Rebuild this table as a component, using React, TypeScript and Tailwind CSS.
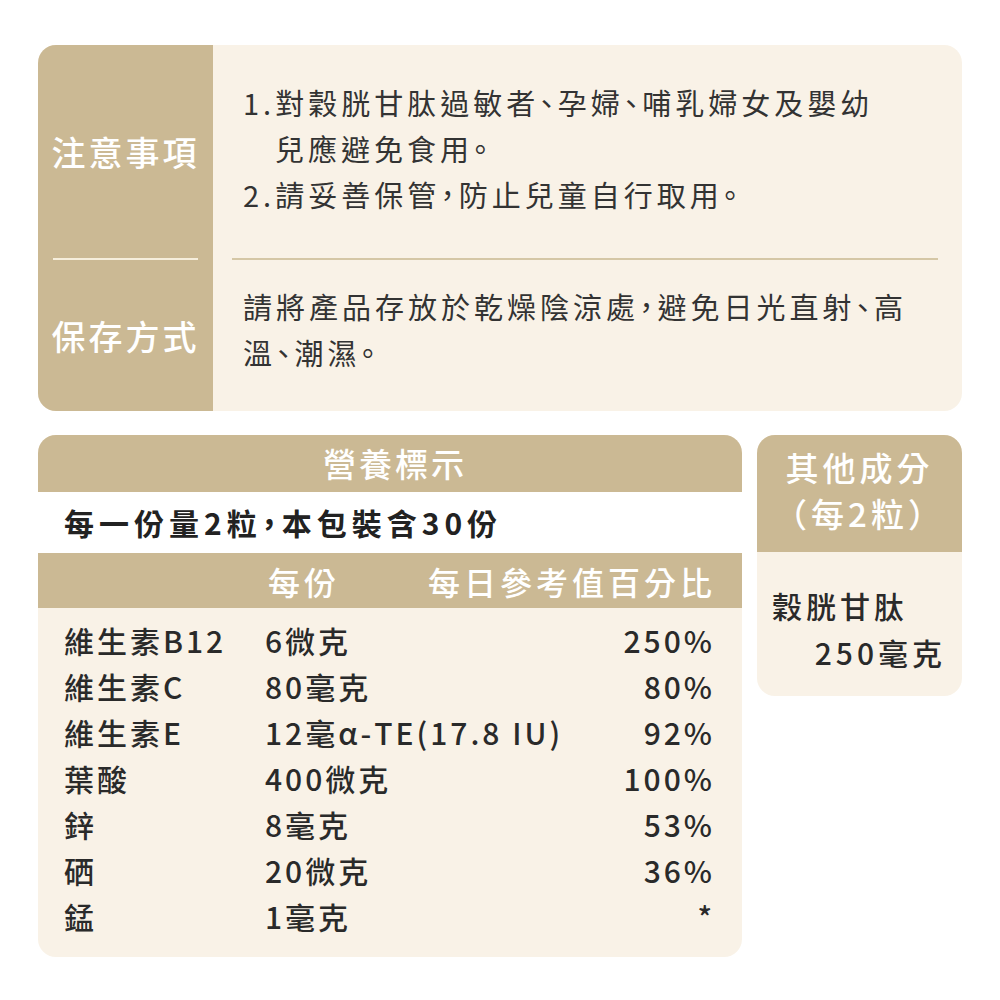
const rows = [
  { name: '維生素B12', amount: '6微克', pct: '250%' },
  { name: '維生素C', amount: '80毫克', pct: '80%' },
  { name: '維生素E', amount: '12毫α-TE(17.8 IU)', pct: '92%' },
  { name: '葉酸', amount: '400微克', pct: '100%' },
  { name: '鋅', amount: '8毫克', pct: '53%' },
  { name: '硒', amount: '20微克', pct: '36%' },
  { name: '錳', amount: '1毫克', pct: '*' },
]

export default function App() {
  return (
    <div className="min-h-screen w-full bg-white px-[38px] pt-[45px] font-['Noto_Sans_CJK_TC','Noto_Sans',sans-serif]">
      {/* Notes + storage */}
      <div className="grid grid-cols-[175px_1fr] overflow-hidden rounded-[18px] bg-[#f9f2e7]">
        <div className="flex h-[213px] items-center justify-center bg-[#cbb994] text-[34px] font-medium tracking-[3px] text-white">
          注意事項
        </div>
        <div className="flex items-center pb-[8px] pl-[30px] text-[29px] leading-[46px] tracking-[4px] text-[#333] [font-feature-settings:'halt']">
          <div>
            <p>1.對穀胱甘肽過敏者、孕婦、哺乳婦女及嬰幼</p>
            <p className="pl-[32px]">兒應避免食用。</p>
            <p>2.請妥善保管，防止兒童自行取用。</p>
          </div>
        </div>

        <div className="bg-[#cbb994] px-[15px]">
          <div className="h-[2px] bg-[#f6eedc]" />
        </div>
        <div className="pl-[19px] pr-[24px]">
          <div className="h-[2px] bg-[#d5c7a6]" />
        </div>

        <div className="flex h-[151px] items-center justify-center bg-[#cbb994] text-[34px] font-medium tracking-[3px] text-white">
          保存方式
        </div>
        <div className="flex items-center pb-[14px] pl-[30px] text-[29px] leading-[46px] tracking-[4px] text-[#333] [font-feature-settings:'halt']">
          <div>
            <p>請將產品存放於乾燥陰涼處，避免日光直射、高</p>
            <p>溫、潮濕。</p>
          </div>
        </div>
      </div>

      <div className="mt-[24px] flex items-start gap-[15px]">
        {/* Nutrition facts */}
        <div className="w-[704px] overflow-hidden rounded-[18px] bg-[#f9f2e7]">
          <div className="flex h-[57px] items-center justify-center bg-[#cbb994] pl-[10px] text-[33px] font-medium tracking-[3px] text-white">
            營養標示
          </div>
          <div className="flex h-[61px] items-center bg-white pl-[26px] text-[30px] font-bold tracking-[5px] text-[#222] [font-feature-settings:'halt']">
            每一份量2粒，本包裝含30份
          </div>
          <div className="grid h-[55px] grid-cols-[201px_1fr_auto] items-center bg-[#cbb994] pl-[26px] pr-[26px] text-[32px] font-medium tracking-[4px] text-white">
            <span />
            <span className="pl-[3px]">每份</span>
            <span>每日參考值百分比</span>
          </div>
          <div className="pb-[18px] pl-[26px] pr-[27px] pt-[9px] text-[30px] font-medium leading-[46px] tracking-[3px] text-[#2a2a2a]">
            {rows.map((r) => (
              <div key={r.name} className="grid h-[46px] grid-cols-[201px_1fr_auto] items-center">
                <span>{r.name}</span>
                <span>{r.amount}</span>
                <span className="text-right">{r.pct}</span>
              </div>
            ))}
          </div>
        </div>

        {/* Other ingredients */}
        <div className="w-[205px] overflow-hidden rounded-[18px] bg-[#f9f2e7]">
          <div className="flex h-[117px] flex-col items-center justify-center bg-[#cbb994] pb-[8px] text-[33px] font-medium leading-[46px] tracking-[4px] text-white">
            <span>其他成分</span>
            <span>（每2粒）</span>
          </div>
          <div className="pb-[20px] pl-[15px] pr-[16px] pt-[30px] text-[30px] font-medium leading-[47px] tracking-[4px] text-[#2a2a2a]">
            <p>穀胱甘肽</p>
            <p className="text-right">250毫克</p>
          </div>
        </div>
      </div>
    </div>
  )
}
